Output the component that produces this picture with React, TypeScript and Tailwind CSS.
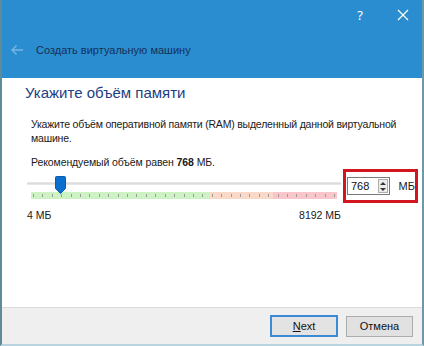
import React from "react";

const ticks = Array.from({ length: 33 }, (_, i) => i);

function Slider() {
  return (
    <div className="relative w-[314px] h-[28px]">
      {/* track */}
      <div className="absolute left-0 right-0 top-[6px] h-[3px] bg-[#dcdcdc] border-y border-[#e6e6e6]" />
      {/* coloured scale */}
      <div className="absolute left-[4px] right-[4px] top-[16px] h-[7px] flex">
        <div className="w-[179px] bg-[#cdf2c4]" />
        <div className="w-[63px] bg-[#fbd9c9]" />
        <div className="flex-1 bg-[#f8c6cb]" />
        <div className="absolute inset-0 flex justify-between items-center px-[2px]">
          {ticks.map((t) => (
            <div key={t} className="w-px h-[3px] bg-[#9a9a9a]" />
          ))}
        </div>
      </div>
      {/* thumb */}
      <svg className="absolute left-[28px] top-[0px]" width="11" height="18" viewBox="0 0 11 18">
        <path d="M1.5 0.5h8a1 1 0 0 1 1 1v11l-5 5l-5-5v-11a1 1 0 0 1 1-1z" fill="#0b6fcf" stroke="#0a5cad" />
      </svg>
    </div>
  );
}

export default function App() {
  return (
    <div
      className="w-[424px] h-[346px] flex flex-col border-l-2 border-r-2 border-b-2 border-l-[#5d8b98] border-r-[#6d98a6] border-b-[#b9d3df] bg-white"
      style={{ fontFamily: '"Liberation Sans", Arial, sans-serif' }}
    >
      {/* title bar */}
      <div className="h-[78px] bg-[#2a8dcf] flex flex-col shrink-0">
        <div className="h-[30px] flex items-center justify-end pr-[13px] gap-[34px] text-white">
          <span className="text-[13px] font-['Noto_Sans',sans-serif] leading-none">?</span>
          <svg width="12" height="12" viewBox="0 0 12 12">
            <path d="M1 1L11 11M11 1L1 11" stroke="#fff" strokeWidth="1.2" />
          </svg>
        </div>
        <div className="flex items-center h-[42px] pb-[2px]">
          <svg className="ml-[8px]" width="14" height="12" viewBox="0 0 14 12">
            <path d="M13 6H2M6.5 1.5L2 6l4.5 4.5" stroke="#7ab6e2" strokeWidth="1.3" fill="none" />
          </svg>
          <span className="ml-[12px] text-[11px] text-[#17305a]">
            Создать виртуальную машину
          </span>
        </div>
      </div>

      {/* content */}
      <div className="flex-1 flex flex-col pl-[23px] pr-[4px]">
        <h1 className="mt-[2px] text-[15px] leading-[26px] text-[#1d3e82]">
          Укажите объём памяти
        </h1>
        <p className="mt-[11px] ml-[6px] text-[10.5px] tracking-[-0.2px] leading-[14px] text-[#1a1a1a]">
          Укажите объём оперативной памяти (RAM) выделенный данной виртуальной машине.
        </p>
        <p className="mt-[10px] ml-[6px] text-[10.5px] tracking-[-0.1px] leading-[14px] text-[#1a1a1a]">
          Рекомендуемый объём равен <b>768</b> МБ.
        </p>
        <div className="flex items-start">
          <div className="flex flex-col mt-[7px] ml-[2px]">
            <Slider />
            <div className="flex justify-between text-[10.5px] text-[#1a1a1a] leading-[14px] mt-[4px]">
              <span>4 МБ</span>
              <span>8192 МБ</span>
            </div>
          </div>
          <div className="ml-[2px] w-[75px] h-[34px] border-[3px] border-[#d2151e] flex items-center pl-[1px]">
            <div className="w-[47px] h-[18px] border border-[#7a7a7a] bg-white flex items-center justify-between pl-[3px] pr-[1px]">
              <span className="text-[11px] leading-none text-[#111]">768</span>
              <div className="w-[10px] h-[14px] border border-[#adadad] bg-[#ececec] flex flex-col items-center justify-around">
                <svg width="6" height="3" viewBox="0 0 6 3"><path d="M0 3L3 0L6 3z" fill="#333" /></svg>
                <svg width="6" height="3" viewBox="0 0 6 3"><path d="M0 0L3 3L6 0z" fill="#333" /></svg>
              </div>
            </div>
            <span className="ml-[9px] text-[11px] text-[#1a1a1a]">МБ</span>
          </div>
        </div>
      </div>

      {/* footer */}
      <div className="h-[37px] shrink-0 bg-[#efefef] border-t border-[#dadada] flex items-center justify-end pr-[9px] gap-[8px]">
        <button className="w-[68px] h-[22px] border-2 border-[#3a8ad6] bg-[#e3e3e3] text-[11px] text-[#111]">
          <span className="underline">N</span>ext
        </button>
        <button className="w-[67px] h-[21px] border border-[#adadad] bg-[#e1e1e1] text-[11px] text-[#111]">
          Отмена
        </button>
      </div>
    </div>
  );
}
